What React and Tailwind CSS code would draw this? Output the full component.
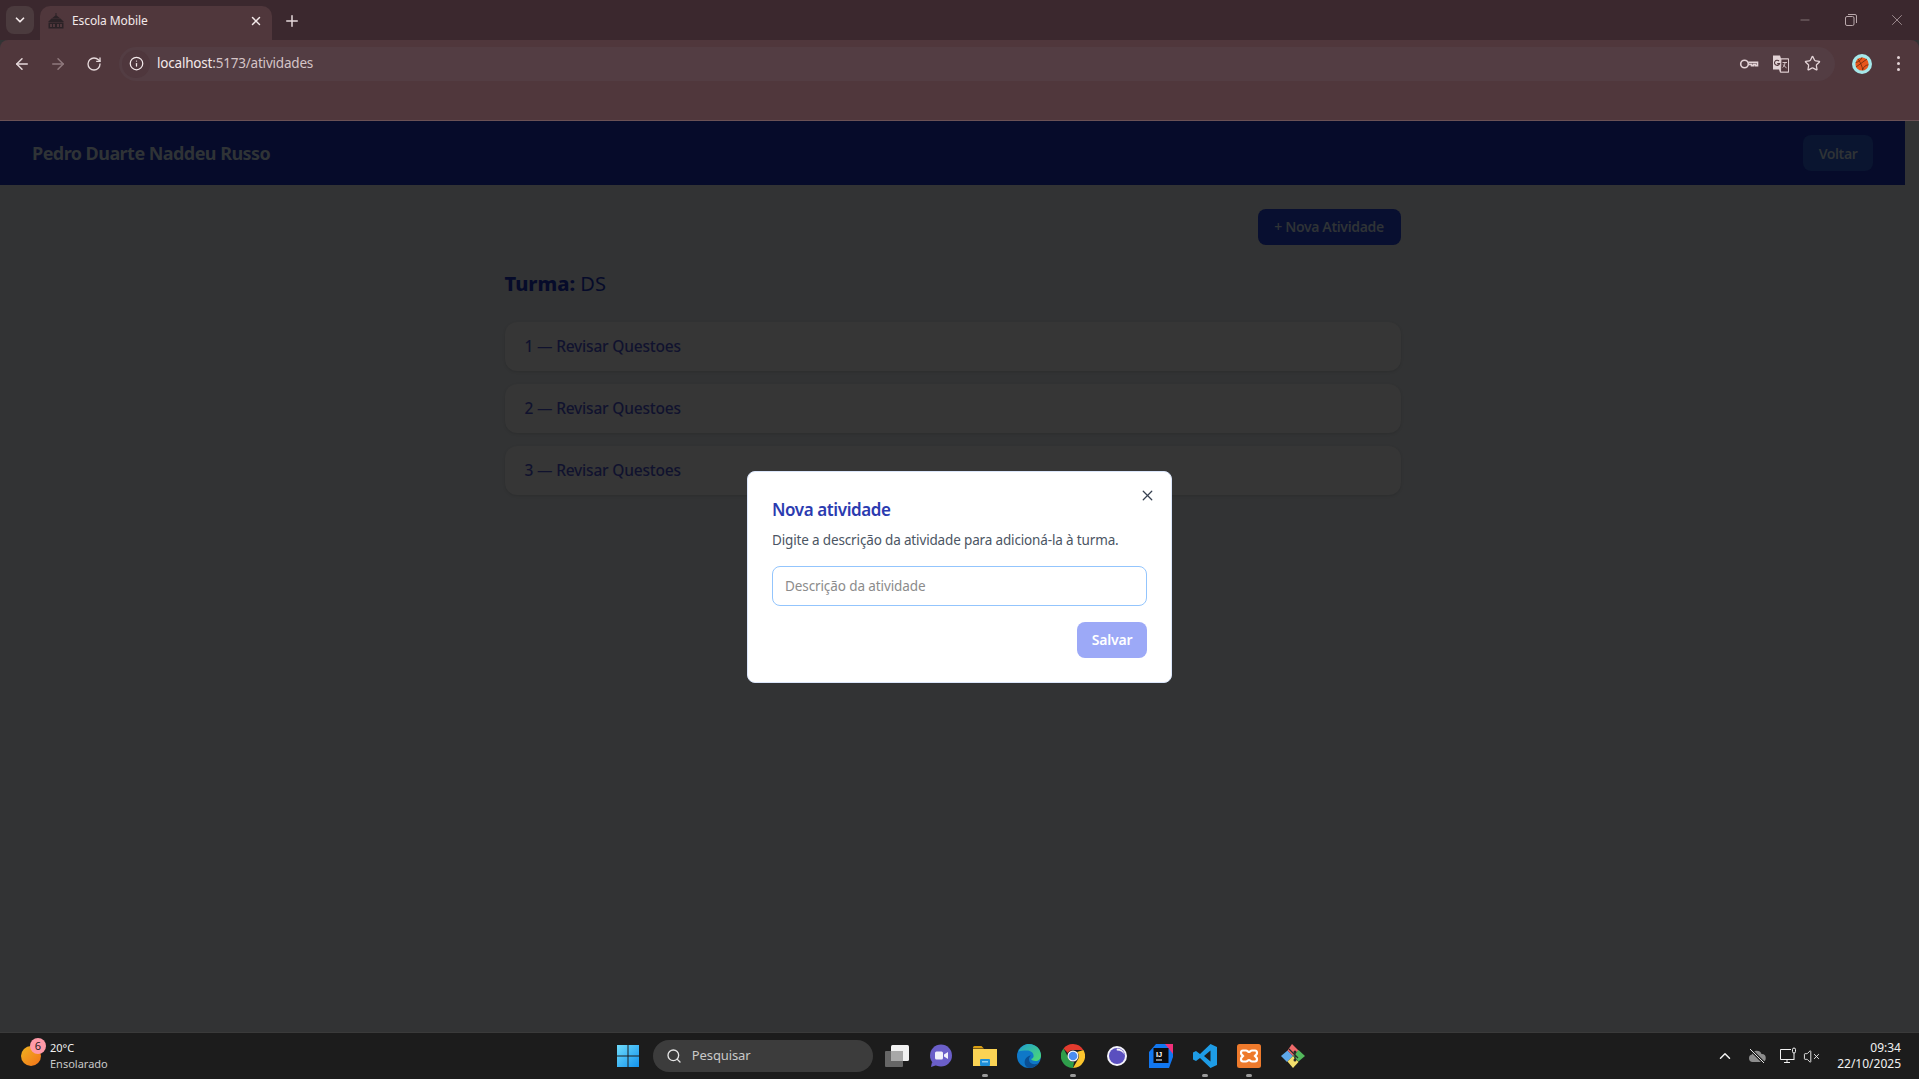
import React from "react";
import { ArrowLeft, ArrowRight, RotateCw, Info, Star, X, Plus, ChevronDown, Search, ChevronUp, VolumeX, Minus } from "lucide-react";

const segoe = "font-['Noto_Sans','Open_Sans',sans-serif]";

function SchoolIcon() {
  return (
    <svg width="16" height="16" viewBox="0 0 16 16" fill="#2b2226">
      <path d="M7.5 0h1v2.5h-1z" />
      <path d="M8 2l4 3.2H4z" />
      <path d="M3.5 5.5h9L16 9H0z" />
      <rect x="0.5" y="9.5" width="15" height="6" />
      <path d="M2 11h2v3H2zM5 11h2v3H5zM9 11h2v3H9zM12 11h2v3h-2z" fill="#50373c" />
    </svg>
  );
}

function KeyIcon() {
  return (
    <svg width="20" height="20" viewBox="0 0 20 20" fill="none" stroke="#e3d3d6" strokeWidth="1.6">
      <circle cx="5.5" cy="10" r="3.8" />
      <path d="M9.3 8.2h9.2v3.6h-2v-1.4h-2v1.4h-2v-1.4H9.3" />
    </svg>
  );
}

function TranslateIcon() {
  return (
    <svg width="18" height="18" viewBox="0 0 18 18">
      <path d="M1 0.5h7l1 3h8v14H8l-1-3H1z" fill="#e3d3d6" />
      <path d="M9 4h7.5v13H8.5z" fill="#50373c" stroke="#e3d3d6" strokeWidth="0.9" />
      <path d="M7 6a2.6 2.6 0 1 0 .6 2.6H5.2" fill="none" stroke="#50373c" strokeWidth="1.1" />
      <path d="M10.5 7.5h4.5M13 7.5c-.2 2.6-1 4-2.4 5M11.2 9.5c.7 1.4 1.8 2.5 3.4 3.4" fill="none" stroke="#e3d3d6" strokeWidth="0.9" />
    </svg>
  );
}

function BasketballAvatar() {
  return (
    <svg width="20" height="20" viewBox="0 0 20 20">
      <circle cx="10" cy="10" r="10" fill="#a5e8ea" />
      <circle cx="10" cy="10" r="6.6" fill="#e8571c" />
      <path d="M4 13 15 5M6 4.8c1.8 2.6 4.6 8 4.8 11.6M3.6 8.6c2.8-.6 5.4-2.6 6.4-5.2M10.8 15.6c.6-2.6 2.6-4.4 5.6-4.8" fill="none" stroke="#5c2409" strokeWidth="0.7" />
    </svg>
  );
}

function WindowsLogo() {
  return (
    <svg width="24" height="24" viewBox="0 0 24 24">
      <defs>
        <linearGradient id="winGrad" x1="0" y1="0" x2="1" y2="1">
          <stop offset="0" stopColor="#6fdcfb" />
          <stop offset="1" stopColor="#1292ee" />
        </linearGradient>
      </defs>
      <path d="M1 1h10.5v10.5H1zM12.5 1H23v10.5H12.5zM1 12.5h10.5V23H1zM12.5 12.5H23V23H12.5z" fill="url(#winGrad)" />
    </svg>
  );
}

function TaskView() {
  return (
    <svg width="24" height="24" viewBox="0 0 24 24">
      <rect x="6" y="1" width="18" height="16" rx="1.5" fill="#f1f1f1" />
      <rect x="0" y="7" width="18" height="16" rx="1" fill="#6d6d6d" fillOpacity="0.92" />
      <rect x="6" y="7" width="12" height="10" fill="#a8a8a8" />
    </svg>
  );
}

function MeetIcon() {
  return (
    <svg width="24" height="24" viewBox="0 0 24 24">
      <circle cx="12" cy="11.5" r="11" fill="#6b5fc9" />
      <path d="M3 18l-1 5 6-2z" fill="#6b5fc9" />
      <rect x="6" y="7.5" width="8" height="8" rx="1.5" fill="#f1f0fb" />
      <path d="M15 10.5l4-2.5v7l-4-2.5z" fill="#f1f0fb" />
    </svg>
  );
}

function FolderIcon() {
  return (
    <svg width="24" height="24" viewBox="0 0 24 24">
      <path d="M0 3.5A1.5 1.5 0 0 1 1.500 2h7l2.500 2.500H0z" fill="#d99e12" />
      <path d="M0 5h24v17H0z" fill="#fbd354" />
      <rect x="7" y="15" width="10" height="7" rx="1" fill="#1f8fd8" />
      <rect x="9" y="17" width="6" height="1.500" fill="#8fd0f5" />
    </svg>
  );
}

function EdgeIcon() {
  return (
    <svg width="24" height="24" viewBox="0 0 24 24">
      <defs>
        <linearGradient id="edgeGrad" x1="0" y1="0" x2="1" y2="1">
          <stop offset="0" stopColor="#1f9fd0" />
          <stop offset="1" stopColor="#4fdc6f" />
        </linearGradient>
      </defs>
      <circle cx="12" cy="12" r="12" fill="#0f78c8" />
      <path d="M1.500 7.500C3.500 2.500 8 0 12 0c6.500 0 12 5 12 11.500 0 3.500-2.500 5.500-5.500 5.500-2 0-4-1-4.500-2 2-.5 3-2 2.500-4C16 8 13 6.500 10 6.500c-3.500 0-6.500 0-8.500 1z" fill="url(#edgeGrad)" />
      <path d="M12 24c-4-1-5-5-4-8 1-3 4-4.500 6-4.500-2 1.500-2.500 4-1.500 6 1.500 3 6 3.500 9 1.500-2 3-5.500 5-9.500 5z" fill="#0a4f94" />
    </svg>
  );
}

function ChromeIcon() {
  return (
    <svg width="24" height="24" viewBox="0 0 24 24">
      <path d="M12 0a12 12 0 0 1 10.400 6H12a6 6 0 0 0-5.200 3L2.500 4.500A12 12 0 0 1 12 0z" fill="#e33b2e" />
      <path d="M22.400 6A12 12 0 0 1 12 24l5.200-9A6 6 0 0 0 16 8z" fill="#fbc52d" />
      <path d="M2.500 4.500 7 13a6 6 0 0 0 6 5l-1 6A12 12 0 0 1 2.500 4.500z" fill="#2f9e4b" />
      <circle cx="12" cy="12" r="5.500" fill="#f5f5f5" />
      <circle cx="12" cy="12" r="4.300" fill="#4a8df0" />
    </svg>
  );
}

function EclipseIcon() {
  return (
    <svg width="24" height="24" viewBox="0 0 24 24">
      <circle cx="12" cy="12" r="10" fill="#f4f3fb" />
      <circle cx="12" cy="12" r="8" fill="#5a4fbf" />
      <path d="M12 4.500a8 8 0 0 1 7.500 6.500c-1-2.500-4-4.500-7.500-4.500-.5-.5-.5-1.500 0-2z" fill="#f4f3fb" />
    </svg>
  );
}

function IntellijIcon() {
  return (
    <svg width="24" height="24" viewBox="0 0 24 24">
      <path d="M7 0h17v13l-4 11H0V8z" fill="#1277f0" />
      <path d="M16 0h8v10z" fill="#f1307a" />
      <rect x="4.500" y="4" width="15" height="15" fill="#0b0b0d" />
      <text x="7" y="12.500" fontSize="7.500" fontWeight="700" fill="#fff" fontFamily="Liberation Sans, sans-serif">IJ</text>
      <rect x="7" y="15.500" width="6" height="1" fill="#fff" />
    </svg>
  );
}

function VscodeIcon() {
  return (
    <svg width="24" height="24" viewBox="0 0 24 24">
      <path d="M17.500 0 24 3v18l-6.500 3L7 14l-4 3-3-1.500v-7L3 7l4 3zM17.500 6.500 11 12l6.500 5.500z" fill="#1e9ce6" fillRule="evenodd" />
    </svg>
  );
}

function XamppIcon() {
  return (
    <svg width="24" height="24" viewBox="0 0 24 24">
      <rect width="24" height="24" rx="2.500" fill="#ee7a2c" />
      <path d="M6 6.500h3c1.500 0 2 1.500 3 1.500s1.500-1.500 3-1.500h3c1.500 0 2 1 2 2.500s-1 2-2 3c1 1 2 1.500 2 3s-.5 2.500-2 2.500h-3c-1.500 0-2-1.500-3-1.500s-1.500 1.500-3 1.500H6c-1.500 0-2-1-2-2.500s1-2 2-3c-1-1-2-1.500-2-3s.5-2.500 2-2.500z" fill="none" stroke="#fff" strokeWidth="2.200" />
    </svg>
  );
}

function GitDiamond() {
  return (
    <svg width="24" height="24" viewBox="0 0 24 24">
      <path d="M12 12 6.500 6.500 0 12l6 6z" fill="#5fa8ea" />
      <path d="M12 12l5.500-5.500L11 0 6.500 6.500z" fill="#ef6a6a" />
      <path d="M12 12l-5.500 5.500L12 24l5.500-6z" fill="#f3df6c" />
      <path d="M12 12l5.500 5.500L24 12l-6.500-6z" fill="#53b85c" />
      <path d="M8 5l9 9M14 8v8" stroke="#2a2a2a" strokeWidth="1.200" />
      <circle cx="14" cy="8" r="1.500" fill="#2a2a2a" />
      <circle cx="14" cy="16" r="1.500" fill="#2a2a2a" />
    </svg>
  );
}

function TaskbarIcon({ children, active }) {
  return (
    <div className="relative flex h-[47px] w-11 items-center justify-center">
      {children}
      {active && <span className="absolute bottom-[3px] h-[3px] w-[6px] rounded-full bg-[#9a9a9a]" />}
    </div>
  );
}

function CloudOff() {
  return (
    <svg width="18" height="18" viewBox="0 0 18 18">
      <path d="M4.500 15a3.800 3.800 0 0 1-.5-7.500A5 5 0 0 1 13.500 7a4 4 0 0 1 .5 8z" fill="#8c8c8c" />
      <path d="M2 2l14 14" stroke="#1c1c1c" strokeWidth="3" />
      <path d="M2 2l14 14" stroke="#e5e5e5" strokeWidth="1" />
    </svg>
  );
}

function MonitorStatus() {
  return (
    <svg width="18" height="18" viewBox="0 0 18 18" fill="none" stroke="#f2f2f2" strokeWidth="1">
      <path d="M11 2.500H.5v10h13.500" />
      <path d="M7 12.500v3M4 15.500h6" />
      <rect x="12.500" y="1" width="3" height="5" rx="1.500" />
      <path d="M14 6v7" />
    </svg>
  );
}

function ListRow({ text }) {
  return (
    <div className="flex h-[49px] items-center rounded-xl bg-[#363636] px-5 text-[15.500px] font-medium tracking-[-0.2px] text-[#10122e] shadow-[0_1px_3px_rgba(0,0,0,0.12)]">
      {text}
    </div>
  );
}

export default function App() {
  return (
    <div className={`flex h-screen w-full flex-col overflow-hidden bg-[#323334] ${segoe}`}>
      {/* browser tabs */}
      <div className="flex h-10 shrink-0 items-end bg-[#3b282e] pl-[6px]">
        <div className="mb-[6px] flex h-7 w-7 items-center justify-center rounded-lg bg-[#4b3b3e] text-[#f3e9ea]">
          <ChevronDown size={14} strokeWidth={3} />
        </div>
        <div className="ml-[6px] flex h-[34px] w-[232px] items-center rounded-t-[10px] bg-[#50373c] pb-[5px] pl-[8px] pr-[9px] text-[#f3e9ea]">
          <SchoolIcon />
          <span className="ml-[8px] flex-1 text-xs tracking-[-0.1px]">Escola Mobile</span>
          <X size={14} strokeWidth={2.500} />
        </div>
        <div className="mb-[10px] ml-[11px] text-[#e6d9db]">
          <Plus size={18} strokeWidth={2} />
        </div>
        <div className="ml-auto mb-[11px] mr-[-1px] flex items-center text-[#b9a8ab]">
          <div className="flex w-[46px] justify-center"><Minus size={14} strokeWidth={1} /></div>
          <div className="flex w-[46px] justify-center">
            <svg width="12" height="12" viewBox="0 0 12 12" fill="none" stroke="currentColor">
              <rect x="0.500" y="2.500" width="8.500" height="9" rx="1.500" />
              <path d="M3 .5h7A1.500 1.500 0 0 1 11.500 2v7" />
            </svg>
          </div>
          <div className="flex w-[46px] justify-center"><X size={18} strokeWidth={1} /></div>
        </div>
      </div>

      {/* toolbar */}
      <div className="h-[81px] shrink-0 rounded-t-lg border-b border-[#6a5155] bg-[#50373c]">
        <div className="flex h-[41px] items-center pl-[13px] pr-[19px] pt-[6px]">
          <ArrowLeft size={18} strokeWidth={2} className="text-[#e6d9db]" />
          <ArrowRight size={18} strokeWidth={2} className="ml-[18px] text-[#8f797d]" />
          <RotateCw size={16} strokeWidth={2} className="ml-[19px] text-[#e6d9db]" />
          <div className="ml-[17px] flex h-[34px] flex-1 items-center rounded-full bg-[#533d43] pr-[14px]">
            <div className="ml-[3px] flex h-[28px] w-[28px] items-center justify-center rounded-full bg-[#4f373d]">
              <Info size={15} strokeWidth={2} className="text-[#f3e9ea]" />
            </div>
            <span className="ml-[7px] text-[13.500px] tracking-[-0.2px] text-[#f3e9ea]">
              localhost<span className="text-[#d5c4c7]">:5173/atividades</span>
            </span>
            <div className="ml-auto flex items-center gap-[13px]">
              <KeyIcon />
              <TranslateIcon />
              <Star size={17} strokeWidth={1.800} className="ml-px text-[#e3d3d6]" />
            </div>
          </div>
          <div className="ml-[17px]"><BasketballAvatar /></div>
          <div className="ml-[25px] flex flex-col gap-[3px]">
            <span className="h-[3px] w-[3px] rounded-full bg-[#e3d3d6]" />
            <span className="h-[3px] w-[3px] rounded-full bg-[#e3d3d6]" />
            <span className="h-[3px] w-[3px] rounded-full bg-[#e3d3d6]" />
          </div>
        </div>
      </div>

      {/* page */}
      <div className="relative flex-1">
        <div className="w-[1905px]">
          <header className="flex h-16 items-center justify-between bg-[#060b2a] pl-8 pr-8">
            <h1 className="text-lg font-bold tracking-[-0.55px] text-[#2f3336]">Pedro Duarte Naddeu Russo</h1>
            <button className="h-9 w-[70px] rounded-lg bg-[#0a1530] pt-px text-sm font-semibold tracking-[-0.4px] text-[#2f3336]">Voltar</button>
          </header>
          <main className="mx-auto w-[896px] pt-6">
            <div className="flex justify-end">
              <button className="h-9 w-[143px] rounded-lg bg-[#080f30] text-sm font-semibold tracking-[-0.35px] text-[#2f3336]">+ Nova Atividade</button>
            </div>
            <h2 className="mt-[25px] text-xl text-[#060b2a]">
              <b className="font-extrabold">Turma:</b> DS
            </h2>
            <div className="mt-[24px] flex flex-col gap-[13px]">
              <ListRow text="1 — Revisar Questoes" />
              <ListRow text="2 — Revisar Questoes" />
              <ListRow text="3 — Revisar Questoes" />
            </div>
          </main>
        </div>

        {/* modal */}
        <div className="absolute inset-0 flex items-center justify-center">
          <div className="relative h-[212px] w-[425px] rounded-lg border border-[#dbe6fb] bg-white px-6 pt-[25px]">
            <button className="absolute right-[15px] top-[15px] text-[#374151]">
              <X size={17} strokeWidth={1.800} />
            </button>
            <h3 className="text-[17px] font-semibold leading-[26px] tracking-[-0.4px] text-[#2b3bb0]">Nova atividade</h3>
            <p className="mt-[7px] text-[13.500px] tracking-[-0.15px] text-[#4b5563]">Digite a descrição da atividade para adicioná-la à turma.</p>
            <input
              readOnly
              placeholder="Descrição da atividade"
              className="mt-[16px] h-10 w-full rounded-lg border border-[#93c5fd] px-3 text-[13.500px] tracking-[-0.1px] outline-none placeholder:text-[#8b8b8b]"
            />
            <div className="mt-[16px] flex justify-end">
              <button className="h-9 w-[70px] rounded-lg bg-[#9ca9f7] text-sm font-semibold tracking-[-0.2px] text-white">Salvar</button>
            </div>
          </div>
        </div>
      </div>

      {/* taskbar */}
      <div className="relative flex h-[47px] shrink-0 items-center border-t border-[#3a3a3a] bg-[#1c1c1c] text-[#f2f2f2]">
        <div className="relative ml-[21px] h-5 w-5 rounded-full bg-gradient-to-br from-[#eeb31f] to-[#f2701a]">
          <span className="absolute left-[9px] top-[-8px] flex h-4 w-4 items-center justify-center rounded-full bg-[#ff9aa8] text-[11px] text-[#1c1c1c]">6</span>
        </div>
        <div className="ml-[9px] flex flex-col text-[11px] leading-[16px]">
          <span>20°C</span>
          <span className="text-[#c9c9c9]">Ensolarado</span>
        </div>

        <div className="ml-[498px] flex items-center">
          <TaskbarIcon><WindowsLogo /></TaskbarIcon>
          <div className="ml-[3px] mr-[2px] flex h-8 w-[220px] items-center rounded-full bg-[#3c3c3c] pl-[13px] text-[13px] tracking-[-0.1px] text-[#c9c9c9]">
            <Search size={16} strokeWidth={2} className="text-[#e5e5e5]" />
            <span className="ml-[10px]">Pesquisar</span>
          </div>
          <TaskbarIcon><TaskView /></TaskbarIcon>
          <TaskbarIcon><MeetIcon /></TaskbarIcon>
          <TaskbarIcon active><FolderIcon /></TaskbarIcon>
          <TaskbarIcon><EdgeIcon /></TaskbarIcon>
          <TaskbarIcon active><ChromeIcon /></TaskbarIcon>
          <TaskbarIcon><EclipseIcon /></TaskbarIcon>
          <TaskbarIcon><IntellijIcon /></TaskbarIcon>
          <TaskbarIcon active><VscodeIcon /></TaskbarIcon>
          <TaskbarIcon active><XamppIcon /></TaskbarIcon>
          <TaskbarIcon><GitDiamond /></TaskbarIcon>
        </div>

        <div className="ml-auto flex items-center pr-[18px]">
          <ChevronUp size={18} strokeWidth={2} />
          <div className="ml-[14px]"><CloudOff /></div>
          <div className="ml-[14px]"><MonitorStatus /></div>
          <VolumeX size={17} strokeWidth={1.300} className="ml-[5px]" />
          <div className="ml-[17px] flex flex-col items-end text-[12px] leading-[16px]">
            <span>09:34</span>
            <span>22/10/2025</span>
          </div>
        </div>
      </div>
    </div>
  );
}
